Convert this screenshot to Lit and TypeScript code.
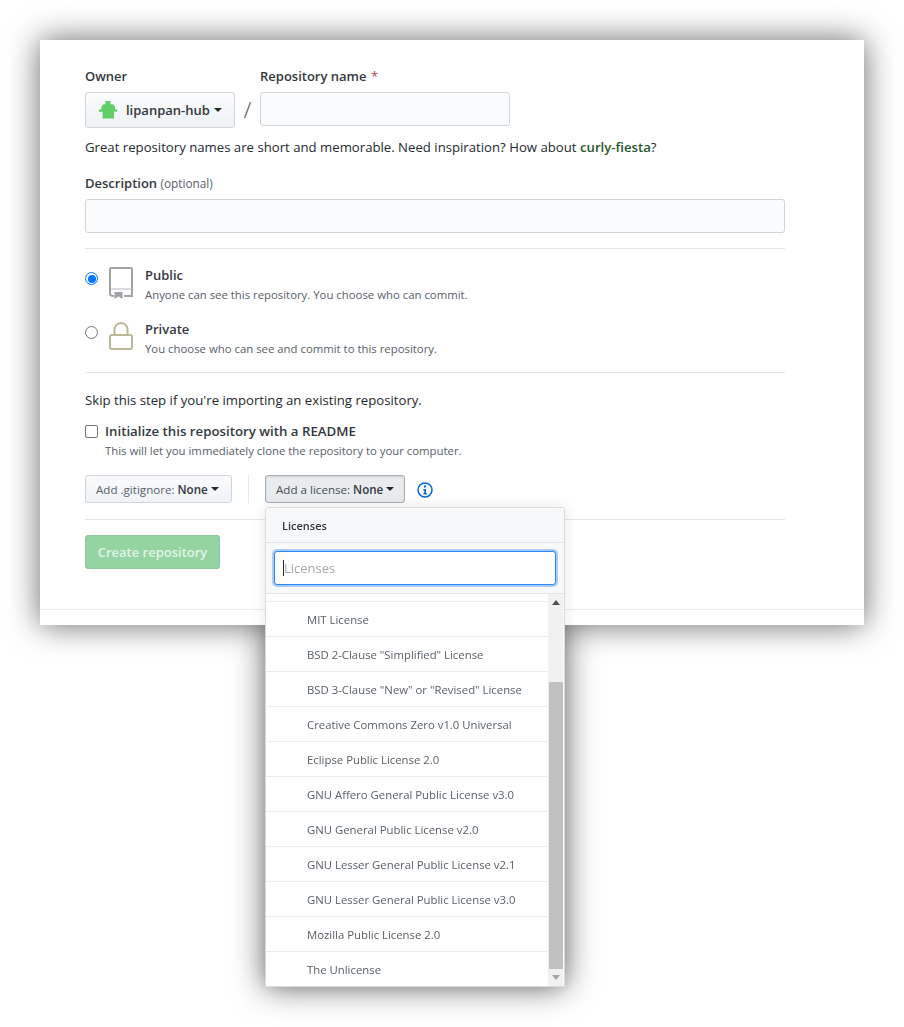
import { LitElement, html, css } from "lit";
import { customElement } from "lit/decorators.js";

const LICENSES = [
  "MIT License",
  'BSD 2-Clause "Simplified" License',
  'BSD 3-Clause "New" or "Revised" License',
  "Creative Commons Zero v1.0 Universal",
  "Eclipse Public License 2.0",
  "GNU Affero General Public License v3.0",
  "GNU General Public License v2.0",
  "GNU Lesser General Public License v2.1",
  "GNU Lesser General Public License v3.0",
  "Mozilla Public License 2.0",
  "The Unlicense",
];

@customElement("app-root")
export class AppRoot extends LitElement {
  static styles = css`
    :host {
      display: block;
      height: 1027px;
      overflow: hidden;
      background: #fff;
      font-family: "Open Sans", "Liberation Sans", sans-serif;
      font-size: 13.18px;
      color: #24292e;
    }
    * { box-sizing: border-box; }
    .stage {
      position: relative;
      margin: 40px 0 0 40px;
      width: 824px;
      height: 947px;
      filter: drop-shadow(0 0 16px rgba(0, 0, 0, 0.6));
    }
    .card {
      width: 824px;
      height: 585px;
      background: #fff;
      padding: 27px 79px 0 45px;
      display: flex;
      flex-direction: column;
    }
    .lbl { font-weight: 600; color: #33383d; display: block; font-size: 13px; line-height: 18px; margin-bottom: 7px; }
    .row1 { display: flex; align-items: flex-start; }
    .owner { width: 150px; }
    .btn {
      display: inline-flex;
      align-items: center;
      border: 1px solid #d1d5da;
      border-radius: 3px;
      background: linear-gradient(#fafbfc, #eff3f6);
      font-weight: 600;
      font-family: inherit;
      color: #33383d;
    }
    .owner .btn {
      width: 150px; height: 36px; padding: 0 0 0 12px; font-size: 13px; white-space: nowrap;
    }
    .avatar { flex: none; margin-right: 8px; display: block; }
    .caret {
      display: inline-block;
      width: 0; height: 0;
      margin-left: 3px;
      border: 4px solid transparent;
      border-top-color: #24292e;
      border-bottom: 0;
      flex: none;
    }
    .owner .caret { margin-left: 4px; }
    .slash { width: 25px; text-align: center; font-size: 22px; line-height: 34px; margin-top: 25px; color: #444d56; font-weight: 300; }
    .repo { width: 250px; }
    .repo .star { color: #b9404a; margin-left: 1px; font-weight: 400; }
    .field {
      display: block;
      border: 1px solid #d1d5da;
      border-radius: 3px;
      background: #fafbfc;
      height: 34px;
      width: 100%;
    }
    .hint { margin: 10px 0 0; line-height: 18px; height: 18px; white-space: nowrap; }
    .hint b { color: #28572b; font-weight: 600; }
    .desc { margin-top: 18px; }
    .desc .opt { font-weight: 400; font-size: 11.8px; color: #586069; }
    hr { border: 0; border-top: 1px solid #e1e4e8; margin: 0; height: 1px; }
    .desc + hr { margin-top: 15px; }
    .choice { display: flex; align-items: flex-start; height: 54px; }
    .choices { margin-top: 17px; height: 106px; }
    .radio {
      width: 13px; height: 13px; border-radius: 50%; border: 1px solid #767676; background: #fff;
      margin: 6px 11px 0 0; flex: none;
    }
    .radio.on { border: 1.5px solid #0075ff; position: relative; }
    .radio.on::after {
      content: ""; position: absolute; inset: 1.5px; border-radius: 50%; background: #0075ff;
    }
    .ico { flex: none; width: 24px; height: 32px; margin: 1px 12px 0 0; display: block; }
    .ctext strong { display: block; font-weight: 600; color: #33383d; line-height: 18px; font-size: 13px; }
    .sub { display: block; font-size: 11.37px; color: #586069; line-height: 18px; margin-top: 2px; white-space: nowrap; }
    .skip { margin: 18px 0 0; line-height: 18px; }
    .init { display: flex; margin-top: 13px; }
    .cb {
      width: 13px; height: 13px; border: 1px solid #767676; border-radius: 2px; background: #fff;
      margin: 3px 7px 0 0; flex: none;
    }
    .init strong { display: block; font-weight: 600; color: #33383d; font-size: 13.25px; line-height: 18px; }
    .pickers { display: flex; align-items: center; margin-top: 15px; height: 28px; }
    .pick {
      height: 28px; font-size: 11.6px; padding: 0 10px; font-weight: 400; color: #586069; white-space: nowrap;
    }
    .pick b { color: #33383d; font-weight: 600; margin-left: 3px; }
    .pick.gi { width: 147px; }
    .pick.li {
      width: 140px; background: #e9ecef; border-color: #a8adb3;
      box-shadow: inset 0 1px 2px rgba(27,31,35,.12);
      color: #444d56;
    }
    .sep { width: 1px; height: 28px; background: #e6e8eb; margin: 0 16px; }
    .info { margin: 2px 0 0 12px; display: block; }
    .pickers + hr { margin-top: 16px; }
    .create {
      margin-top: 15px; width: 135px; height: 34px; border: 1px solid #8dc69b; border-radius: 3px;
      background: #94d3a2; color: #e3f4e7; font-weight: 600; font-size: 13px; font-family: inherit;
      display: flex; align-items: center; justify-content: center;
    }
    .foot { position: absolute; left: 0; right: 0; top: 569px; height: 1px; background: #e9ebed; }
    .menu {
      position: absolute;
      left: 225px; top: 467px;
      width: 300px; height: 480px;
      background: #fff;
      border: 1px solid #d9dcdf;
      border-radius: 3px 3px 0 0;
      box-shadow: 0 0 14px rgba(27,31,35,.10);
      display: flex;
      flex-direction: column;
      overflow: hidden;
    }
    .mhead {
      height: 35px; flex: none; background: #f6f8fa; border-bottom: 1px solid #e1e4e8;
      padding: 0 16px; font-size: 11px; font-weight: 600; color: #33383d; display: flex; align-items: center;
    }
    .mfilter { height: 51px; flex: none; background: #f6f8fa; border-bottom: 1px solid #e1e4e8; padding: 8px 8px 0 8px; }
    .minput {
      height: 34px; width: 100%; border: 1px solid #2188ff; border-radius: 3px; background: #fff;
      box-shadow: 0 0 0 2px rgba(3,102,214,.3);
      display: flex; align-items: center; padding-left: 8px; color: #a4a9ae; font-size: 13px;
    }
    .cursor { width: 1px; height: 16px; background: #24292e; }
    .mbody { flex: 1; display: flex; min-height: 0; }
    .list { flex: 1; padding-top: 7px; }
    .item {
      height: 35px; border-top: 1px solid #eaecef; padding-left: 41px;
      display: flex; align-items: center; font-size: 11.35px; color: #586069; white-space: nowrap;
    }
    .sb { width: 16px; flex: none; background: #f1f1f1; display: flex; flex-direction: column; align-items: center; border-right: 1px solid #fafafa; }
    .arrow { height: 17px; flex: none; display: flex; align-items: center; justify-content: center; }
    .gap { height: 71px; flex: none; }
    .thumb { flex: 1; width: 14px; background: #c1c1c1; }
  `;

  render() {
    return html`
      <div class="stage">
        <div class="card">
          <div class="row1">
            <div class="owner">
              <span class="lbl">Owner</span>
              <div class="btn">
                <svg class="avatar" width="20" height="20" viewBox="0 0 20 20">
                  <path fill="#5fcf66" d="M7.500 1h5v3.200h2.600L17 6.600v3h2.200v2.200H16v6.700H4.600v-6.700H1V9.600h2.400v-3l2-2.400h2.100z"/>
                </svg>
                <span>lipanpan-hub</span><i class="caret"></i>
              </div>
            </div>
            <div class="slash">/</div>
            <div class="repo">
              <span class="lbl">Repository name <span class="star">*</span></span>
              <div class="field"></div>
            </div>
          </div>
          <p class="hint">Great repository names are short and memorable. Need inspiration? How about <b>curly-fiesta</b>?</p>
          <div class="desc">
            <span class="lbl">Description <span class="opt">(optional)</span></span>
            <div class="field"></div>
          </div>
          <hr />
          <div class="choices">
            <div class="choice">
              <i class="radio on"></i>
              <svg class="ico" viewBox="0 0 24 32">
                <path fill="none" stroke="#a0a3a6" stroke-width="2" d="M1 22V2a1 1 0 0 1 1-1h20a1 1 0 0 1 1 1v27h-8M1 22v4a3 3 0 0 0 3 3h1"/>
                <path fill="none" stroke="#c2c5c8" stroke-width="1.200" d="M2 22h21"/>
                <path fill="#a0a3a6" d="M5.500 25h8v7l-4-2.600-4 2.600z"/>
              </svg>
              <div class="ctext"><strong>Public</strong><span class="sub">Anyone can see this repository. You choose who can commit.</span></div>
            </div>
            <div class="choice">
              <i class="radio"></i>
              <svg class="ico" viewBox="0 0 24 32">
                <rect x="1" y="14" width="22" height="14" rx="2" fill="none" stroke="#bdb896" stroke-width="2"/>
                <path fill="none" stroke="#bdb896" stroke-width="2" d="M5.500 14V8.500a6.500 6.500 0 0 1 13 0V14"/>
              </svg>
              <div class="ctext"><strong>Private</strong><span class="sub">You choose who can see and commit to this repository.</span></div>
            </div>
          </div>
          <hr />
          <p class="skip">Skip this step if you're importing an existing repository.</p>
          <div class="init">
            <i class="cb"></i>
            <div><strong>Initialize this repository with a README</strong><span class="sub">This will let you immediately clone the repository to your computer.</span></div>
          </div>
          <div class="pickers">
            <div class="btn pick gi">Add .gitignore:<b>None</b><i class="caret"></i></div>
            <div class="sep"></div>
            <div class="btn pick li">Add a license:<b>None</b><i class="caret"></i></div>
            <svg class="info" width="16" height="16" viewBox="0 0 16 16">
              <circle cx="8" cy="8" r="7" fill="none" stroke="#0366d6" stroke-width="1.500"/>
              <path fill="#0366d6" d="M7 3.500h2v2H7zM6.300 7H9v4.200h1v1.300H6.300v-1.300h1V8.300h-1z"/>
            </svg>
          </div>
          <hr />
          <div class="create">Create repository</div>
          <div class="foot"></div>
        </div>
        <div class="menu">
          <div class="mhead">Licenses</div>
          <div class="mfilter"><div class="minput"><i class="cursor"></i>Licenses</div></div>
          <div class="mbody">
            <div class="list">
              ${LICENSES.map((l) => html`<div class="item">${l}</div>`)}
            </div>
            <div class="sb">
              <div class="arrow"><svg width="8" height="5" viewBox="0 0 8 5"><path fill="#505050" d="M4 0l4 5H0z"/></svg></div>
              <div class="gap"></div>
              <div class="thumb"></div>
              <div class="arrow"><svg width="8" height="5" viewBox="0 0 8 5"><path fill="#a3a3a3" d="M0 0h8L4 5z"/></svg></div>
            </div>
          </div>
        </div>
      </div>
    `;
  }
}
